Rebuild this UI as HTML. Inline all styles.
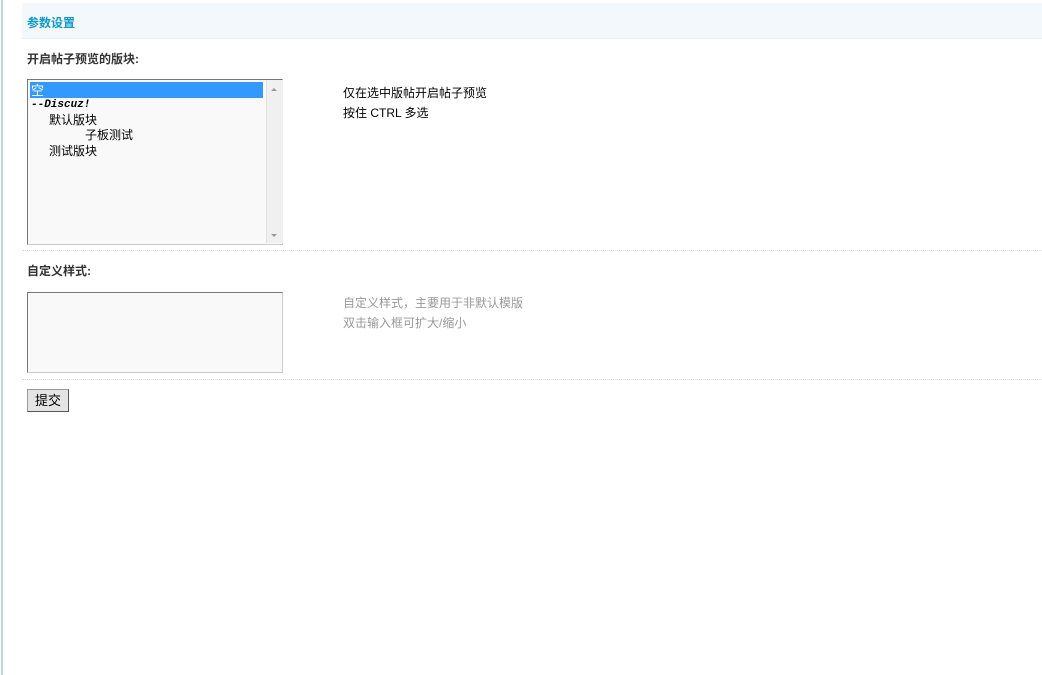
<!DOCTYPE html><html><head><meta charset="utf-8"><style>
body{margin:0;width:1042px;height:675px;background:#fff;font:12px "Liberation Sans","Noto Sans CJK SC",sans-serif;position:relative;overflow:hidden;color:#000}
.a{position:absolute}
</style></head><body>
<div class="a" style="left:1px;top:0;width:2px;height:675px;background:#b9d9e9"></div>
<div class="a" style="left:22px;top:3px;width:1020px;height:35px;background:#f2f8fc;border-bottom:1px solid #e6eef4"></div>
<div class="a" style="left:27px;top:14px;color:#1199cc;font-weight:bold">参数设置</div>
<div class="a" style="left:27px;top:50px;color:#333;font-weight:bold">开启帖子预览的版块:</div>
<div class="a" style="left:27px;top:79px;width:254px;height:164px;border:1px solid #777;border-right-color:#ccc;border-bottom-color:#ccc;background:#f9f9f9"></div>
<div class="a" style="left:266px;top:80px;width:16px;height:163px;background:#f0f0f0;border-left:1px solid #e2e2e2"></div>
<div class="a" style="left:271px;top:85px;width:0;height:0;border:3px solid transparent;border-bottom:3px solid #999"></div>
<div class="a" style="left:271px;top:234px;width:0;height:0;border:3px solid transparent;border-top:3px solid #999"></div>
<div class="a" style="left:30px;top:82px;width:233px;height:16px;background:#3399ff"></div>
<div class="a" style="left:31px;top:83px;color:#fff;font-size:13px;line-height:15px">空</div>
<div class="a" style="left:31px;top:99px;font:italic bold 11px 'Liberation Mono',monospace">--Discuz!</div>
<div class="a" style="left:49px;top:113px;line-height:15px">默认版块</div>
<div class="a" style="left:85px;top:128px;line-height:15px">子板测试</div>
<div class="a" style="left:49px;top:144px;line-height:15px">测试版块</div>
<div class="a" style="left:343px;top:83px;line-height:20px">仅在选中版帖开启帖子预览<br>按住 CTRL 多选</div>
<div class="a" style="left:22px;top:250px;width:1020px;border-top:1px dotted #ddd"></div>
<div class="a" style="left:27px;top:262px;color:#333;font-weight:bold">自定义样式:</div>
<div class="a" style="left:27px;top:292px;width:254px;height:79px;border:1px solid #777;border-right-color:#ccc;border-bottom-color:#ccc;background:#f9f9f9"></div>
<div class="a" style="left:343px;top:293px;line-height:20px;color:#999">自定义样式，主要用于非默认模版<br>双击输入框可扩大/缩小</div>
<div class="a" style="left:22px;top:379px;width:1020px;border-top:1px dotted #ddd"></div>
<div class="a" style="left:27px;top:389px;width:40px;height:21px;background:#e4e4e4;border:1px solid #999;border-right-color:#555;border-bottom-color:#555;text-align:center;line-height:21px;font-size:13px">提交</div>
</body></html>
